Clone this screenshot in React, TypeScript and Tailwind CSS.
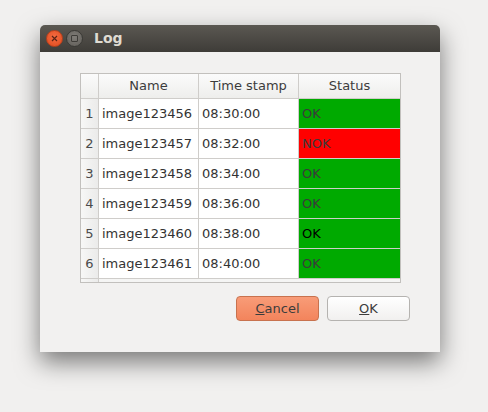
import React from "react";

type Row = { id: number; name: string; time: string; ok: boolean; strong?: boolean };

const rows: Row[] = [
  { id: 1, name: "image123456", time: "08:30:00", ok: true },
  { id: 2, name: "image123457", time: "08:32:00", ok: false },
  { id: 3, name: "image123458", time: "08:34:00", ok: true },
  { id: 4, name: "image123459", time: "08:36:00", ok: true },
  { id: 5, name: "image123460", time: "08:38:00", ok: true, strong: true },
  { id: 6, name: "image123461", time: "08:40:00", ok: true },
];

const font = "[font-family:'DejaVu_Sans',sans-serif]";

const TitleButtons = () => (
  <div className="flex items-center gap-[3px]">
    <div className="w-[17px] h-[17px] rounded-full bg-[radial-gradient(circle_at_50%_40%,#f46c43,#de4a1c)] border border-[#b8401c] flex items-center justify-center">
      <svg width="7" height="7" viewBox="0 0 7 7">
        <path d="M1 1L6 6M6 1L1 6" stroke="#5a2415" strokeWidth="1.2" />
      </svg>
    </div>
    <div className="w-[17px] h-[17px] rounded-full bg-[radial-gradient(circle_at_50%_40%,#807d78,#5f5c57)] border border-[#3a3935] flex items-center justify-center">
      <div className="w-[7px] h-[7px] border border-[#3e3c38] rounded-[1px]" />
    </div>
  </div>
);

export default function App() {
  return (
    <div className={`w-[488px] h-[412px] bg-[#f1f0ef] pt-[25px] pl-[40px] ${font}`}>
      <div className="w-[400px] h-[327px] bg-[#f2f1f0] rounded-t-[5px] shadow-[0_10px_24px_rgba(0,0,0,0.5)] flex flex-col">
        <div className="h-[27px] rounded-t-[5px] bg-[linear-gradient(#5b5852,#3e3c38)] flex items-center pl-[6px]">
          <TitleButtons />
          <span className="ml-[11px] text-[14px] font-bold text-[#dfdbd2]">Log</span>
        </div>

        <div className="flex-1 flex flex-col pt-[21px] pl-[40px]">
          <div className="w-[321px] h-[210px] border border-[#c2c0bd] bg-[#f5f5f4] flex flex-col">
            <div className="grid grid-cols-[18px_100px_100px_101px] h-[25px] text-[13px] text-[#3c3c3c]">
              <div className="border-r border-b border-[#cfcdca] bg-[linear-gradient(#fbfbfb,#eeeeec)]" />
              <div className="border-r border-b border-[#cfcdca] bg-[linear-gradient(#fbfbfb,#eeeeec)] flex items-center justify-center">Name</div>
              <div className="border-r border-b border-[#cfcdca] bg-[linear-gradient(#fbfbfb,#eeeeec)] flex items-center justify-center">Time stamp</div>
              <div className="border-b border-[#cfcdca] bg-[linear-gradient(#fbfbfb,#eeeeec)] flex items-center justify-center">Status</div>
            </div>
            {rows.map((r) => (
              <div key={r.id} className="grid grid-cols-[18px_100px_100px_101px] h-[30px] text-[13px]">
                <div className="border-r border-b border-[#cfcdca] bg-[linear-gradient(90deg,#f7f7f6,#ebebea)] flex items-center justify-center text-[#4a4a4a]">{r.id}</div>
                <div className="border-r border-b border-[#cfcdca] bg-white flex items-center pl-[3px] text-[#333]">{r.name}</div>
                <div className="border-r border-b border-[#cfcdca] bg-white flex items-center pl-[3px] text-[#333]">{r.time}</div>
                <div
                  className={`border-b border-[#cfcdca] flex items-center pl-[3px] ${r.ok ? "bg-[#00aa00]" : "bg-[#ff0000]"} ${r.strong ? "text-black" : "text-[#3a3a3a]"}`}
                >
                  {r.ok ? "OK" : "NOK"}
                </div>
              </div>
            ))}
            <div className="flex-1 flex">
              <div className="w-[18px] border-r border-[#cfcdca] bg-[linear-gradient(90deg,#f7f7f6,#ebebea)]" />
              <div className="flex-1" />
            </div>
          </div>

          <div className="flex gap-[8px] mt-[13px] ml-[156px] text-[13px] text-[#3c3c3c]">
            <button className="w-[83px] h-[25px] rounded-[4px] border border-[#c8724e] bg-[linear-gradient(#f89c78,#f3845c)]">
              <u>C</u>ancel
            </button>
            <button className="w-[83px] h-[25px] rounded-[4px] border border-[#b5b3b0] bg-[linear-gradient(#ffffff,#f1f0ef)]">
              <u>O</u>K
            </button>
          </div>
        </div>
      </div>
    </div>
  );
}
